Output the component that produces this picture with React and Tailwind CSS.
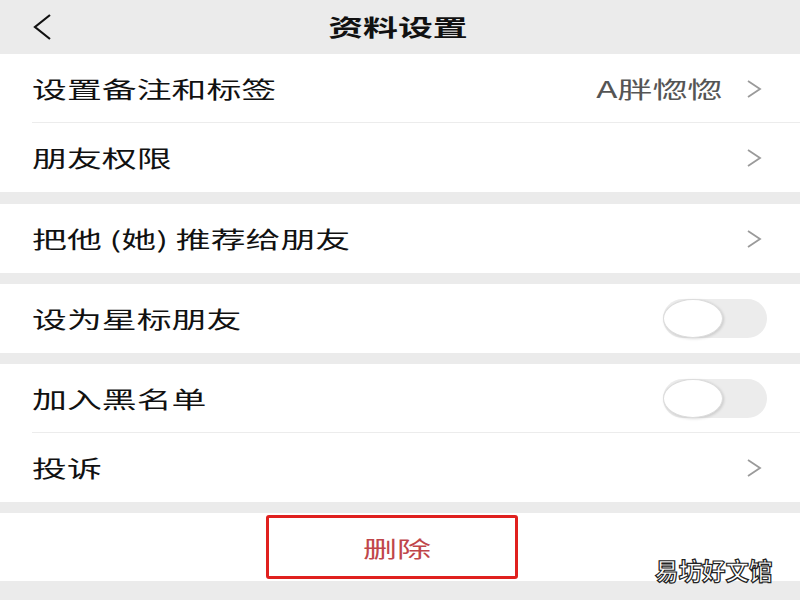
import React from 'react'

const CJK = '"Noto Sans CJK SC", "Noto Sans", sans-serif'

// the screenshot is stretched sideways, so glyphs get a horizontal scale
function Wide({ children, className = '' }) {
  return <span className={`inline-block scale-x-[1.55] ${className}`}>{children}</span>
}

function Chevron() {
  return (
    <svg width="16" height="20" viewBox="0 0 16 20" className="shrink-0">
      <polyline points="2,2 14,10 2,18" fill="none" stroke="#9a9a9a" strokeWidth="1.8" />
    </svg>
  )
}

function Toggle() {
  return (
    <div className="w-[104px] h-[39px] rounded-full bg-[#ececec] relative shrink-0">
      <div className="absolute left-0 top-0 w-[60px] h-[39px] rounded-[50%] bg-white border border-[#dcdcdc] shadow-[1px_1px_3px_rgba(0,0,0,0.15)]" />
    </div>
  )
}

function Row({ label, value, right, divider }) {
  return (
    <div className="relative h-[69px] bg-white flex items-center pl-8 pr-[38px]">
      <div className="flex-1">
        <Wide className="origin-left text-[22.5px] text-[#111]">{label}</Wide>
      </div>
      {value && <Wide className="origin-right text-[22.5px] text-[#555] mr-[24px]">{value}</Wide>}
      {right === 'toggle' ? <div className="-mr-[5px]"><Toggle /></div> : <Chevron />}
      {divider && <div className="absolute left-8 right-0 bottom-0 h-px bg-[#ececec]" />}
    </div>
  )
}

export default function App() {
  return (
    <div className="w-[800px] h-[600px] bg-[#ebebeb] overflow-hidden relative" style={{ fontFamily: CJK }}>
      {/* header */}
      <div className="h-[54px] flex items-center relative">
        <svg width="22" height="28" viewBox="0 0 22 28" className="absolute left-[31px] top-[13px]">
          <polyline points="19,2 4,14 19,26" fill="none" stroke="#111" strokeWidth="2.2" />
        </svg>
        <div className="w-full text-center pr-[4px]">
          <Wide className="origin-center text-[22.5px] font-bold text-[#111]">资料设置</Wide>
        </div>
      </div>

      <Row label="设置备注和标签" value="A胖惚惚" divider />
      <Row label="朋友权限" />
      <div className="h-[12px]" />
      <Row label="把他 (她) 推荐给朋友" />
      <div className="h-[11px]" />
      <Row label="设为星标朋友" right="toggle" />
      <div className="h-[11px]" />
      <Row label="加入黑名单" right="toggle" divider />
      <Row label="投诉" />
      <div className="h-[11px]" />

      {/* delete */}
      <div className="h-[68px] bg-white flex items-center">
        <div className="ml-[266px] w-[252px] h-[64px] border-[3px] border-[#e0201e] rounded-[3px] flex items-center justify-center text-[#c0464a]">
          <Wide className="origin-center text-[22px] ml-[10px]">删除</Wide>
        </div>
      </div>

      {/* watermark */}
      <div className="absolute left-[655px] top-[553px] text-[23.5px] text-white [-webkit-text-stroke:1.2px_#222] font-bold">
        易坊好文馆
      </div>
    </div>
  )
}
